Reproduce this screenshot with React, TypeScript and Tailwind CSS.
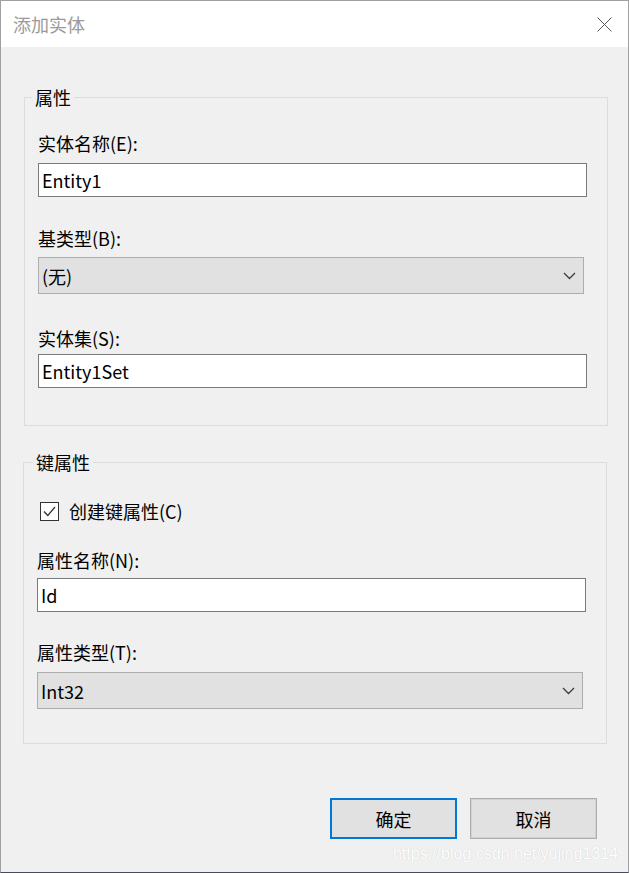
import React from 'react';

const font = { fontFamily: '"Noto Sans CJK SC", "Noto Sans", sans-serif' };

const Chevron = () => (
  <svg width="13" height="8" viewBox="0 0 13 8" fill="none">
    <polyline points="1,1 6.5,6.5 12,1" stroke="#3c3c3c" strokeWidth="1.3" />
  </svg>
);

const Combo = ({ value, width }: { value: string; width: string }) => (
  <div className={`flex h-[37px] items-center justify-between border border-[#adadad] bg-[#e1e1e1] pl-[3px] pr-[7px] ${width}`}>
    <span className="text-[18px] leading-[24px] text-black">{value}</span>
    <Chevron />
  </div>
);

const TextBox = ({ value, width, className = '' }: { value: string; width: string; className?: string }) => (
  <input
    type="text"
    defaultValue={value}
    className={`block h-[34px] border border-[#7a7a7a] bg-white px-[3px] text-[18px] leading-[24px] text-black outline-none ${width} ${className}`}
    style={font}
  />
);

export default function App() {
  return (
    <div
      className="relative flex h-[873px] w-[629px] flex-col border border-[#a0a0a0] border-b-[#4a4a5a] bg-[#f0f0f0] text-black"
      style={font}
    >
      {/* title bar */}
      <div className="flex h-[46px] items-center justify-between bg-white pl-[12px] pr-[16px]">
        <span className="text-[18px] leading-[24px] text-[#9a9a9a]">添加实体</span>
        <svg width="15" height="15" viewBox="0 0 15 15">
          <line x1="0.5" y1="0.5" x2="14.5" y2="14.5" stroke="#555" strokeWidth="1" />
          <line x1="14.5" y1="0.5" x2="0.5" y2="14.5" stroke="#555" strokeWidth="1" />
        </svg>
      </div>

      {/* 属性 */}
      <fieldset className="ml-[23px] mt-[40px] w-[584px] border border-[#dcdcdc] pl-[13px] pt-[24px] pb-[37px]">
        <legend className="-ml-[6px] px-[3px] text-[18px] leading-[20px]">属性</legend>
        <div className="text-[18px] leading-[24px]">实体名称(E):</div>
        <TextBox value="Entity1" width="w-[549px]" className="mt-[8px]" />
        <div className="mt-[29px] text-[18px] leading-[24px]">基类型(B):</div>
        <div className="mt-[7px]">
          <Combo value="(无)" width="w-[546px]" />
        </div>
        <div className="mt-[32px] text-[18px] leading-[24px]">实体集(S):</div>
        <TextBox value="Entity1Set" width="w-[549px]" className="mt-[4px]" />
      </fieldset>

      {/* 键属性 */}
      <fieldset className="ml-[22px] mt-[26px] w-[584px] border border-[#dcdcdc] pl-[13px] pt-[27px] pb-[34px]">
        <legend className="-ml-[4px] px-[3px] text-[18px] leading-[20px]">键属性</legend>
        <label className="flex items-center text-[18px] leading-[24px]">
          <span className="ml-[3px] flex h-[19px] w-[19px] items-center justify-center border border-[#333] bg-white">
            <svg width="15" height="15" viewBox="0 0 15 15" fill="none">
              <polyline points="2,7.5 5.8,11.5 13,3" stroke="#333" strokeWidth="1.3" />
            </svg>
          </span>
          <span className="ml-[10px]">创建键属性(C)</span>
        </label>
        <div className="mt-[25px] text-[18px] leading-[24px]">属性名称(N):</div>
        <TextBox value="Id" width="w-[549px]" className="mt-[6px]" />
        <div className="mt-[28px] text-[18px] leading-[24px]">属性类型(T):</div>
        <div className="mt-[8px]">
          <Combo value="Int32" width="w-[546px]" />
        </div>
      </fieldset>

      {/* buttons */}
      <div className="mt-[54px] flex justify-end gap-[13px] pr-[31px]">
        <button className="h-[41px] w-[127px] border-2 border-[#0078d7] bg-[#e1e1e1] text-[18px] leading-[24px]">
          确定
        </button>
        <button className="h-[41px] w-[127px] border border-[#adadad] bg-[#e1e1e1] text-[18px] leading-[24px] shadow-[inset_0_0_0_1px_#d2d2d2]">
          取消
        </button>
      </div>

      <div
        className="absolute bottom-[9px] right-[10px] text-[16px] leading-[18px] text-white [text-shadow:0_0_1px_#c4c4c4]"
        style={{ fontFamily: '"Liberation Sans", Arial, sans-serif' }}
      >
        https://blog.csdn.net/yujing1314
      </div>
    </div>
  );
}
